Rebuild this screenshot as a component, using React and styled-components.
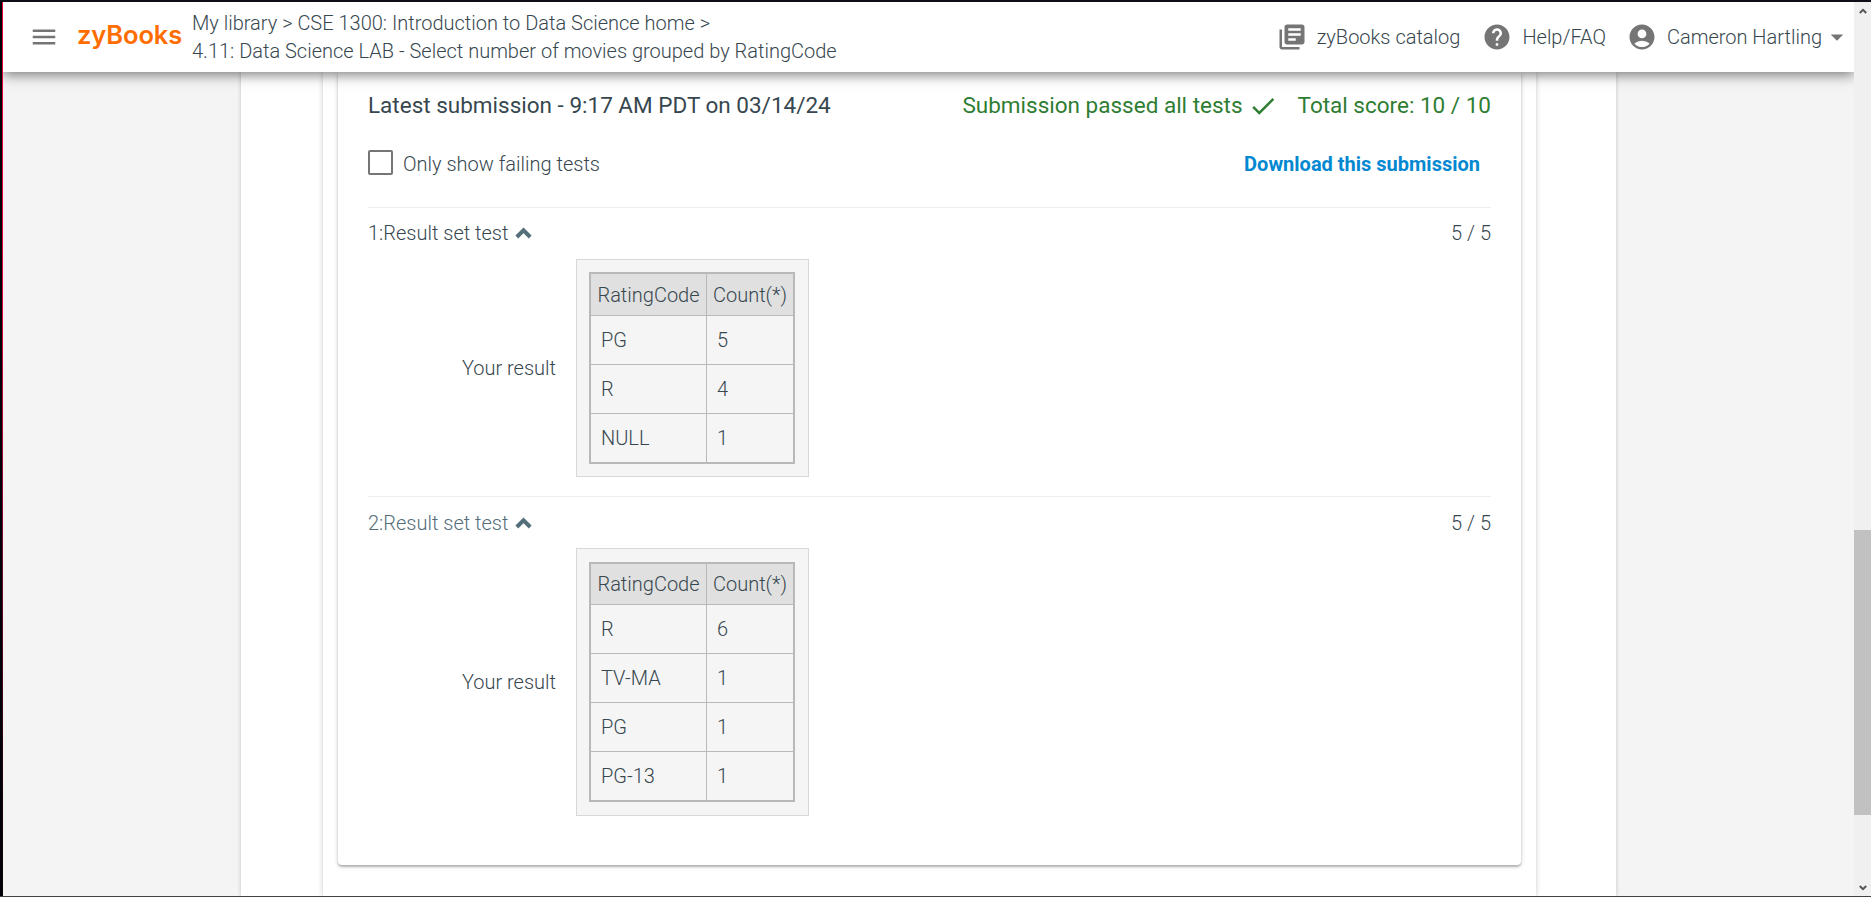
import React from "react";
import styled, { createGlobalStyle } from "styled-components";
import {
  MdMenu,
  MdLibraryBooks,
  MdHelp,
  MdAccountCircle,
  MdArrowDropDown,
  MdCheck,
} from "react-icons/md";

const GlobalStyle = createGlobalStyle`
  *, *::before, *::after { box-sizing: border-box; }
  html, body, #root { height: 100%; }
  body {
    margin: 0;
    overflow: hidden;
    font-family: Roboto, "Liberation Sans", sans-serif;
    font-size: 20px;
    font-weight: 300;
    line-height: 28px;
    color: #37474f;
  }
  svg { display: block; flex: none; }
`;

const Screen = styled.div`
  height: 100vh;
  display: grid;
  grid-template-columns: 2px 1px 1fr 17px;
  grid-template-rows: 2px 1fr 1px;
  background: #f4f4f4;
`;
const TopEdge = styled.div`
  grid-column: 1 / -1;
  background: #0f0d15;
`;
const BottomEdge = styled.div`
  grid-column: 1 / -1;
  background: #414141;
`;
const LeftEdge = styled.div`
  background: #02010a;
`;
const AccentEdge = styled.div`
  background: linear-gradient(#e5003c, #d8063c 35%, #6a0826 65%, #1c0410 88%, #0a0208);
`;
const Viewport = styled.div`
  display: flex;
  flex-direction: column;
  min-height: 0;
  overflow: hidden;
`;

const Header = styled.header`
  position: relative;
  z-index: 1;
  flex: none;
  height: 70px;
  display: flex;
  align-items: center;
  padding: 0 2px 0 26px;
  background: #fff;
  box-shadow: 0 3px 12px rgba(0, 0, 0, 0.5);
  svg { color: #757575; }
`;
const Logo = styled.div`
  margin: -4px 0 0 18px;
  width: 115px;
  font: 600 25.5px/30px Inter, "Liberation Sans", sans-serif;
  letter-spacing: -0.1px;
  color: #ff6d00;
`;
const Crumbs = styled.nav`
  flex: 1;
  white-space: nowrap;
`;
const HeaderItem = styled.div`
  display: flex;
  align-items: center;
  gap: 10px;
  margin-left: ${(p) => p.$before || 0}px;
`;

const Page = styled.main`
  flex: 1;
  min-height: 0;
  width: 1375px;
  margin: 0 auto;
  padding: 0 80px 0 82px;
  background: #fff;
  box-shadow: 0 0 4px rgba(0, 0, 0, 0.22);
`;
const Activity = styled.section`
  height: 100%;
  padding: 0 15px;
  box-shadow: 0 0 5px rgba(0, 0, 0, 0.22);
`;
const Card = styled.div`
  height: 793px;
  padding: 16px 30px 0;
  border-radius: 0 0 4px 4px;
  box-shadow: 0 1px 5px rgba(0, 0, 0, 0.16), 0 2px 2px rgba(0, 0, 0, 0.22);
`;
const Summary = styled.div`
  display: flex;
  align-items: center;
  height: 34px;
  font-size: 22.5px;
  font-weight: 400;
`;
const Passed = styled.div`
  margin-left: auto;
  display: flex;
  align-items: center;
  gap: 5px;
  color: #2e7d32;
  svg { margin-top: 2px; }
`;
const Score = styled.div`
  margin-left: 20px;
  color: #2e7d32;
`;
const Controls = styled.div`
  display: flex;
  align-items: center;
  justify-content: space-between;
  height: 50px;
  margin: 17px 0 18px;
`;
const CheckLabel = styled.label`
  display: flex;
  align-items: center;
  gap: 10px;
`;
const CheckBox = styled.span`
  width: 25px;
  height: 25px;
  border: 2px solid #757575;
  border-radius: 2px;
  margin-top: -3px;
`;
const Download = styled.a`
  padding-right: 11px;
  font-weight: 700;
  color: #0288d1;
`;

const Test = styled.section`
  border-top: 1px solid #eee;
  height: ${(p) => p.$height}px;
`;
const TestHead = styled.div`
  display: flex;
  align-items: center;
  height: 51px;
  padding: ${(p) => (p.$muted ? "1px 0 0" : "0 0 1px")};
  color: ${(p) => (p.$muted ? "#546e7a" : "#37474f")};
  svg { margin-left: 7px; color: #546e7a; }
`;
const Points = styled.span`
  margin-left: auto;
  color: #37474f;
`;
const TestBody = styled.div`
  display: flex;
  align-items: center;
  gap: 20px;
`;
const ResultLabel = styled.div`
  width: 188px;
  text-align: right;
`;
const ResultBox = styled.div`
  padding: ${(p) => p.$pad}px 12px;
  width: 233px;
  border: 1px solid #d8d8d8;
  background: #f5f5f5;
`;
const Grid = styled.div`
  display: grid;
  width: 206px;
  grid-template-columns: 115px 86px;
  grid-template-rows: ${(p) => p.$head}px;
  grid-auto-rows: 48px;
  gap: 1px;
  border: 2px solid #b9b9b9;
  background: #b9b9b9;
`;
const Cell = styled.div`
  display: flex;
  align-items: center;
  padding: 0 0 1px 10px;
  background: #f5f5f5;
`;
const HeadCell = styled(Cell)`
  padding: 0;
  justify-content: center;
  background: #e0e0e0;
`;

const ScrollBar = styled.div`
  display: flex;
  flex-direction: column;
  align-items: center;
  justify-content: space-between;
  background: #f0f0f0;
`;
const ScrollTrack = styled.div`
  flex: 1;
  width: 100%;
  padding-top: 511px;
`;
const ScrollThumb = styled.div`
  height: 285px;
  background: #c1c1c1;
`;
const ScrollButton = styled.div`
  height: 17px;
  display: grid;
  place-items: center;
`;

const tests = [
  {
    name: "1:Result set test",
    height: 289,
    head: 41,
    pad: 12,
    rows: [["PG", "5"], ["R", "4"], ["NULL", "1"]],
  },
  {
    name: "2:Result set test",
    muted: true,
    height: 320,
    head: 40,
    pad: 13,
    rows: [["R", "6"], ["TV-MA", "1"], ["PG", "1"], ["PG-13", "1"]],
  },
];

const Chevron = () => (
  <svg width="17" height="12" viewBox="0 0 17 12">
    <path d="M1.8 10 8.5 3.4 15.2 10" fill="none" stroke="currentColor" strokeWidth="4" />
  </svg>
);

const ScrollArrow = ({ down }) => (
  <svg width="8" height="6" viewBox="0 0 8 6">
    <path
      d={down ? "M.8 1 4 4.2 7.2 1" : "M.8 5 4 1.8 7.2 5"}
      fill="none"
      stroke="#555"
      strokeWidth="2"
    />
  </svg>
);

function TestResult({ test }) {
  return (
    <Test $height={test.height}>
      <TestHead $muted={test.muted}>
        {test.name}
        <Chevron />
        <Points>5 / 5</Points>
      </TestHead>
      <TestBody>
        <ResultLabel>Your result</ResultLabel>
        <ResultBox $pad={test.pad}>
          <Grid $head={test.head}>
            <HeadCell>RatingCode</HeadCell>
            <HeadCell>Count(*)</HeadCell>
            {test.rows.map(([code, count]) => (
              <React.Fragment key={code}>
                <Cell>{code}</Cell>
                <Cell>{count}</Cell>
              </React.Fragment>
            ))}
          </Grid>
        </ResultBox>
      </TestBody>
    </Test>
  );
}

export default function App() {
  return (
    <>
      <GlobalStyle />
      <Screen>
        <TopEdge />
        <LeftEdge />
        <AccentEdge />
        <Viewport>
          <Header>
            <MdMenu size={30} />
            <Logo>zyBooks</Logo>
            <Crumbs>
              <div>My library &gt; CSE 1300: Introduction to Data Science home &gt;</div>
              <div>4.11: Data Science LAB - Select number of movies grouped by RatingCode</div>
            </Crumbs>
            <HeaderItem>
              <MdLibraryBooks size={30} />
              zyBooks catalog
            </HeaderItem>
            <HeaderItem $before={22}>
              <MdHelp size={30} />
              Help/FAQ
            </HeaderItem>
            <HeaderItem $before={21}>
              <MdAccountCircle size={30} />
              Cameron Hartling
            </HeaderItem>
            <MdArrowDropDown size={30} />
          </Header>
          <Page>
            <Activity>
              <Card>
                <Summary>
                  Latest submission - 9:17 AM PDT on 03/14/24
                  <Passed>
                    Submission passed all tests
                    <MdCheck size={30} />
                  </Passed>
                  <Score>Total score: 10 / 10</Score>
                </Summary>
                <Controls>
                  <CheckLabel>
                    <CheckBox />
                    Only show failing tests
                  </CheckLabel>
                  <Download>Download this submission</Download>
                </Controls>
                {tests.map((t) => (
                  <TestResult key={t.name} test={t} />
                ))}
              </Card>
            </Activity>
          </Page>
        </Viewport>
        <ScrollBar>
          <ScrollButton><ScrollArrow /></ScrollButton>
          <ScrollTrack><ScrollThumb /></ScrollTrack>
          <ScrollButton><ScrollArrow down /></ScrollButton>
        </ScrollBar>
        <BottomEdge />
      </Screen>
    </>
  );
}
